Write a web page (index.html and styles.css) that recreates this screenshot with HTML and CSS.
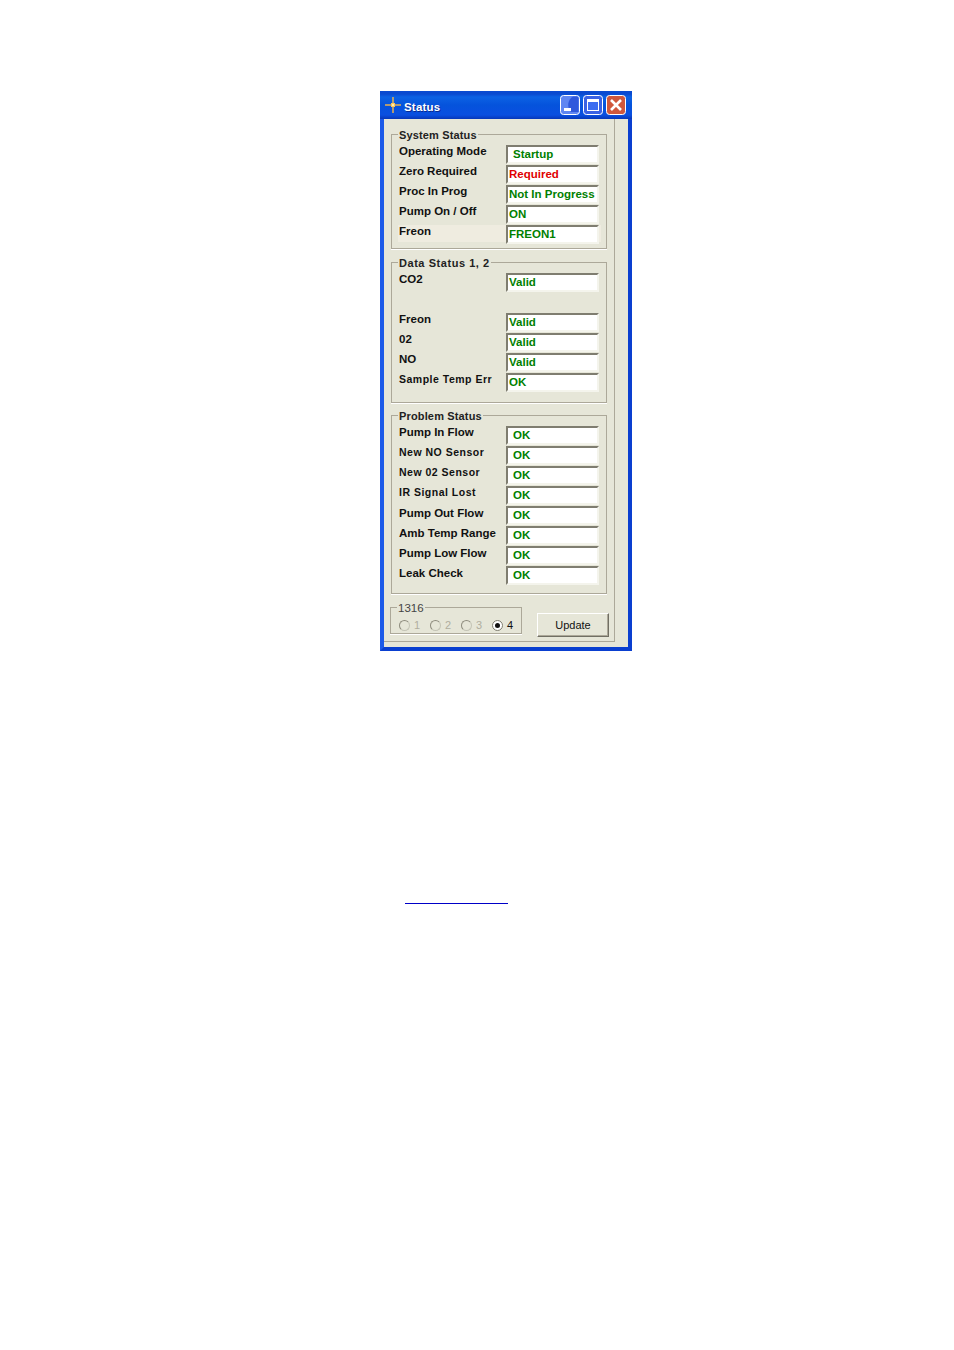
FILE: index.html
```html
<!DOCTYPE html>
<html lang="en">
<head>
    <meta charset="UTF-8">
    <title>Status</title>
    <link rel="stylesheet" href="styles.css">
</head>
<body>
    <div class="window">
        <div class="titlebar">
            <svg class="title-icon" width="16" height="16" viewBox="0 0 16 16">
                <path d="M0 8H16" stroke="#f8b848" stroke-width="1.4"/>
                <path d="M8 0V16" stroke="#f8b848" stroke-width="1.4"/>
                <path d="M6 6h4v4H6z" fill="#fbc860"/>
                <path d="M7 7h2v2H7z" fill="#ffeeb0"/>
            </svg>
            <span class="title-text">Status</span>
            <div class="title-buttons">
                <svg class="title-btn" width="20" height="20" viewBox="0 0 20 20">
                    <rect x=".5" y=".5" width="19" height="19" rx="3" fill="#5f86f2" stroke="#fff"/>
                    <path d="M13 1.5 A10 10 0 0 0 11 17 L18.5 17 L18.5 3 Q18.5 1.5 17 1.5 Z" fill="#2f58dc"/>
                    <path d="M4 13h7v3H4z" fill="#fff"/>
                </svg>
                <svg class="title-btn" width="20" height="20" viewBox="0 0 20 20">
                    <rect x=".5" y=".5" width="19" height="19" rx="3" fill="#3a62e4" stroke="#fff"/>
                    <rect x="4.5" y="4.5" width="11" height="11" fill="#3c6cf0" stroke="#fff"/>
                    <path d="M4 4h12v3H4z" fill="#fff"/>
                </svg>
                <svg class="title-btn" width="20" height="20" viewBox="0 0 20 20">
                    <rect x=".5" y=".5" width="19" height="19" rx="3" fill="#d0583c" stroke="#fff"/>
                    <path d="M5 5 L15 15 M15 5 L5 15" stroke="#fff" stroke-width="2.6"/>
                </svg>
            </div>
        </div>

        <div class="client">
            <div class="panel">
                <fieldset class="group group-system">
                    <legend>System Status</legend>
                    <div class="row"><label>Operating Mode</label><div class="field inset">Startup</div></div>
                    <div class="row"><label>Zero Required</label><div class="field red">Required</div></div>
                    <div class="row"><label>Proc In Prog</label><div class="field">Not In Progress</div></div>
                    <div class="row"><label>Pump On / Off</label><div class="field">ON</div></div>
                    <div class="row row-hi"><label>Freon</label><div class="field">FREON1</div></div>
                </fieldset>

                <fieldset class="group group-data">
                    <legend>Data Status 1, 2</legend>
                    <div class="row row-gap"><label>CO2</label><div class="field">Valid</div></div>
                    <div class="row"><label>Freon</label><div class="field">Valid</div></div>
                    <div class="row"><label>02</label><div class="field">Valid</div></div>
                    <div class="row"><label>NO</label><div class="field">Valid</div></div>
                    <div class="row"><label class="small">Sample Temp Err</label><div class="field">OK</div></div>
                </fieldset>

                <fieldset class="group group-problem">
                    <legend>Problem Status</legend>
                    <div class="row"><label>Pump In Flow</label><div class="field inset">OK</div></div>
                    <div class="row"><label class="small">New NO Sensor</label><div class="field inset">OK</div></div>
                    <div class="row"><label class="small">New 02 Sensor</label><div class="field inset">OK</div></div>
                    <div class="row"><label class="small">IR Signal Lost</label><div class="field inset">OK</div></div>
                    <div class="row row-low"><label>Pump Out Flow</label><div class="field inset">OK</div></div>
                    <div class="row row-low"><label>Amb Temp Range</label><div class="field inset">OK</div></div>
                    <div class="row row-low"><label>Pump Low Flow</label><div class="field inset">OK</div></div>
                    <div class="row row-low"><label>Leak Check</label><div class="field inset">OK</div></div>
                </fieldset>

                <div class="bottom">
                    <fieldset class="group group-radio">
                        <legend>1316</legend>
                        <div class="radios">
                            <span class="radio off"><i></i>1</span>
                            <span class="radio off"><i></i>2</span>
                            <span class="radio off"><i></i>3</span>
                            <span class="radio on"><i></i>4</span>
                        </div>
                    </fieldset>
                    <button class="update">Update</button>
                </div>
            </div>
        </div>
    </div>

    <div class="rule"></div>
</body>
</html>
```

FILE: styles.css
```css
body {
    margin: 0;
    padding: 91px 0 0 380px;
    background: #fff;
    font-family: "Liberation Sans", Arial, sans-serif;
    font-size: 12px;
}

.window {
    width: 252px;
    height: 560px;
    box-sizing: border-box;
    background: #0a45d8;
    border: solid #0a3fd0;
    border-width: 0 4px 4px 4px;
    border-left-color: #1c5ae8;
    display: flex;
    flex-direction: column;
}

.titlebar {
    height: 28px;
    flex: none;
    margin: 0 -4px;
    padding: 0 6px 0 5px;
    display: flex;
    align-items: center;
    background: linear-gradient(#0a4ad0 0, #0a4ad0 3px, #0c62e4 6px, #0553dc 14px, #0a4fe0 24px, #0737b8 28px);
}

.title-icon {
    flex: none;
}

.title-text {
    margin: 3px 0 0 3px;
    color: #fff;
    font-size: 11.5px;
    font-weight: bold;
    letter-spacing: 0.2px;
    text-shadow: 1px 1px 0 #0a2a90;
}

.title-buttons {
    margin-left: auto;
    display: flex;
    gap: 3px;
}

.title-btn {
    display: block;
}

.client {
    flex: 1;
    background: #e6e6d8;
    padding-bottom: 5px;
    display: flex;
}

.panel {
    width: 231px;
    box-sizing: border-box;
    padding: 9px 0 0 7px;
    border-right: 1px solid #aca899;
    border-bottom: 1px solid #aca899;
}

.group {
    margin: 0;
    padding: 1px 0 0 6px;
    width: 216px;
    box-sizing: border-box;
    border: 1px solid #aca899;
    box-shadow: 0 1px 0 #fff;
}

legend {
    margin-left: 0;
    padding: 1px 1px 0 1px;
    font-size: 11px;
    font-weight: bold;
    line-height: 12px;
    letter-spacing: 0.15px;
    color: #222;
}

.group-system {
    height: 121px;
}

.group-data {
    height: 147px;
    margin-top: 7px;
}

.group-data legend {
    letter-spacing: 0.55px;
}

.group-problem {
    height: 185px;
    margin-top: 6px;
}

.row {
    height: 20px;
    display: grid;
    grid-template-columns: 108px 93px;
    color: #111;
}

.row-gap {
    height: 40px;
}

.row-hi {
    width: 203px;
    background: linear-gradient(transparent 3px, #efece0 3px);
}

.row label {
    margin: 2px 0 0 1px;
    font-size: 11.5px;
    font-weight: bold;
    line-height: 14px;
    white-space: nowrap;
}

.row-low label {
    margin-top: 3px;
}

.row label.small {
    font-size: 10.5px;
    letter-spacing: 0.5px;
}

.field {
    height: 19px;
    box-sizing: border-box;
    margin-top: 3px;
    padding-left: 1px;
    background: #fff;
    border: 2px solid;
    border-color: #7f7d70 #f4f4ec #f4f4ec #7f7d70;
    color: #008000;
    font-size: 11.5px;
    font-weight: bold;
    line-height: 15px;
    white-space: nowrap;
}

.field.inset {
    padding-left: 5px;
}

.field.red {
    color: #e00000;
}

.bottom {
    display: flex;
    align-items: flex-start;
    margin-top: 7px;
    margin-left: -1px;
}

.group-radio {
    width: 132px;
    height: 33px;
    padding: 0;
}

.group-radio legend {
    margin-left: 6px;
    font-size: 11.5px;
    font-weight: normal;
    letter-spacing: 0;
    padding: 1px 1px 0 1px;
    color: #444;
}

.radios {
    display: flex;
    gap: 6px;
    padding: 5px 0 0 8px;
    color: #b0ae9f;
    font-size: 11px;
    line-height: 13px;
}

.radio {
    display: flex;
    align-items: center;
    gap: 4px;
    width: 25px;
}

.radio i {
    width: 11px;
    height: 11px;
    box-sizing: border-box;
    border-radius: 50%;
    border: 1px solid #8e8c7e;
    border-right-color: #c4c4b6;
    border-bottom-color: #c4c4b6;
    position: relative;
}

.radio.on {
    color: #111;
}

.radio.on i {
    background: #fff;
    border-color: #7f7d70;
}

.radio.on i::after {
    content: "";
    position: absolute;
    left: 2px;
    top: 2px;
    width: 5px;
    height: 5px;
    border-radius: 50%;
    background: #111;
}

.update {
    width: 72px;
    height: 24px;
    margin: 12px 0 0 15px;
    padding: 0;
    background: #e6e6d8;
    border: 1px solid;
    border-color: #fff #716f64 #716f64 #fff;
    box-shadow: inset -1px -1px 0 #aca899;
    font-family: "Liberation Sans", Arial, sans-serif;
    font-size: 11px;
    color: #111;
}

.rule {
    width: 103px;
    height: 1px;
    margin: 252px 0 0 25px;
    background: #0000c8;
}
```
